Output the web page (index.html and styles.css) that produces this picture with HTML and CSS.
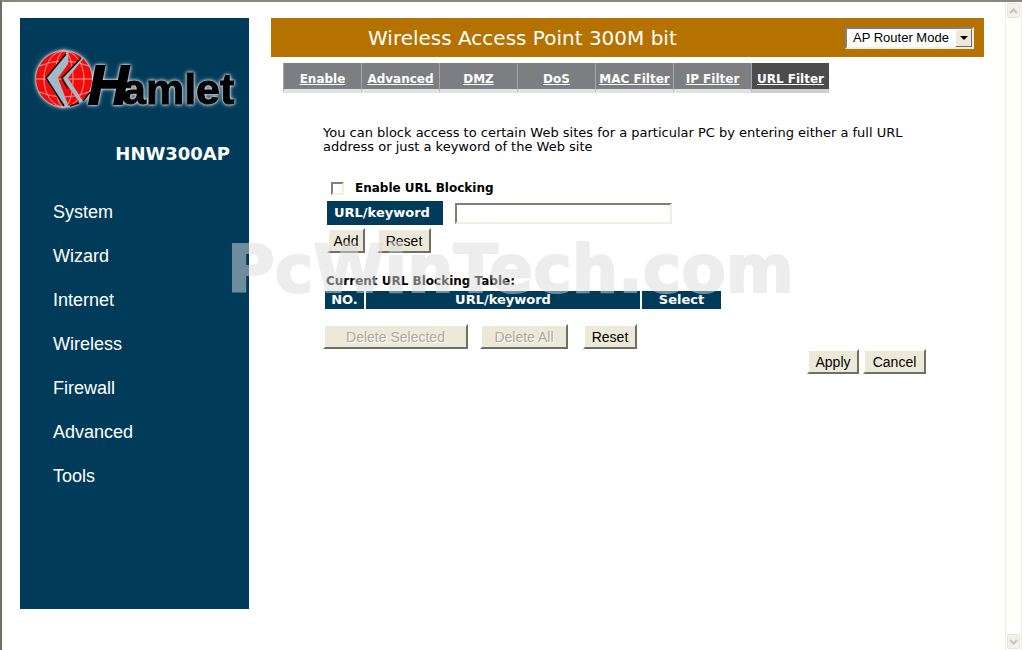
FILE: index.html
```html
<!DOCTYPE html>
<html lang="en">
<head>
    <meta charset="UTF-8">
    <meta name="viewport" content="width=device-width, initial-scale=1.0">
    <title>Wireless Access Point 300M bit</title>
    <link rel="stylesheet" href="styles.css">
</head>
<body>
    <div class="frame">
        <aside class="sidebar">
            <svg class="logo" width="206" height="68" viewBox="0 0 206 68" role="img" aria-label="Hamlet">
                <defs>
                    <clipPath id="globe">
                        <path d="M34 4 L34 8 L13 32 L32 62 L0 68 L0 0 Z"/>
                        <path d="M37 3 L50 11 L30 32 L48 57 L38 64 L26 32 L36 18 Z"/>
                        <path d="M51 13 L36 32 L51 55 L66 50 L66 14 Z"/>
                    </clipPath>
                </defs>
                <g class="logo-glow">
                    <circle cx="32" cy="33" r="28" class="globe-back"/>
                    <g clip-path="url(#globe)">
                        <circle cx="32" cy="33" r="28" class="globe-red"/>
                        <g class="globe-grid">
                            <path d="M4 33 H60 M7 20 Q32 10 57 20 M7 46 Q32 56 57 46"/>
                            <ellipse cx="32" cy="33" rx="20" ry="28"/>
                            <ellipse cx="32" cy="33" rx="9" ry="28"/>
                        </g>
                    </g>
                    <path class="globe-edge" d="M34 8 L14 32 L32 60 M49 12 L30 32 L36 43 M38 60 L47 57 M51 55 L58 46"/>
                    <text class="logo-name" y="58"><tspan class="logo-h" x="56">H</tspan><tspan x="90">amlet</tspan></text>
                </g>
            </svg>
            <h1 class="model">HNW300AP</h1>
            <nav class="menu">
                <a href="#">System</a>
                <a href="#">Wizard</a>
                <a href="#">Internet</a>
                <a href="#">Wireless</a>
                <a href="#">Firewall</a>
                <a href="#">Advanced</a>
                <a href="#">Tools</a>
            </nav>
        </aside>

        <main class="main">
            <header class="banner">
                <h2>Wireless Access Point 300M bit</h2>
                <div class="select-wrap">
                    <select class="mode" aria-label="Mode">
                        <option>AP Router Mode</option>
                    </select>
                    <span class="select-arrow"></span>
                </div>
            </header>

            <nav class="tabs">
                <a href="#">Enable</a>
                <a href="#">Advanced</a>
                <a href="#">DMZ</a>
                <a href="#">DoS</a>
                <a href="#">MAC Filter</a>
                <a href="#">IP Filter</a>
                <a href="#" class="active">URL Filter</a>
            </nav>

            <form class="content">
                <p class="intro">You can block access to certain Web sites for a particular PC by entering either a full URL address or just a keyword of the Web site</p>

                <div class="enable">
                    <input type="checkbox" id="enable">
                    <label for="enable">Enable URL Blocking</label>
                </div>
                <div class="keyword">
                    <label for="keyword">URL/keyword</label>
                    <input type="text" id="keyword">
                </div>
                <div class="add-row">
                    <button type="button" class="add">Add</button>
                    <button type="reset">Reset</button>
                </div>

                <table class="list">
                    <caption>Current URL Blocking Table:</caption>
                    <thead>
                        <tr>
                            <th class="no">NO.</th>
                            <th>URL/keyword</th>
                            <th class="sel">Select</th>
                        </tr>
                    </thead>
                </table>

                <div class="delete-row">
                    <button type="button" class="del-selected" disabled>Delete Selected</button>
                    <button type="button" class="del-all" disabled>Delete All</button>
                    <button type="reset">Reset</button>
                </div>
                <div class="apply-row">
                    <button type="submit" class="apply">Apply</button>
                    <button type="button" class="cancel">Cancel</button>
                </div>
            </form>
        </main>

        <div class="scrollbar">
            <span class="scroll-btn"><svg width="9" height="6" viewBox="0 0 9 6"><path d="M1 5 L4.500 1.500 L8 5"/></svg></span>
            <span class="scroll-btn"><svg width="9" height="6" viewBox="0 0 9 6"><path d="M1 1 L4.500 4.500 L8 1"/></svg></span>
        </div>
    </div>
    <div class="watermark">PcWinTech.com</div>
</body>
</html>
```

FILE: styles.css
```css
* { margin: 0; padding: 0; box-sizing: border-box; }
body { font-family: Verdana, "DejaVu Sans", sans-serif; font-size: 12px; background: #fff; color: #000; }

.frame { display: flex; min-height: 100vh; border-top: 2px solid #8a877a; border-left: 2px solid #716f64; }

/* left menu */
.sidebar { flex: none; align-self: flex-start; width: 229px; margin: 16px 22px 0 18px; padding: 28px 0 111px; background: #003b59; color: #fff; }
.logo { display: block; margin-left: 12px; overflow: visible; }
.logo-glow { filter: drop-shadow(0 0 1px #fff) drop-shadow(0 0 2px #a9c0cc); }
.globe-back { fill: #a3b9c6; }
.globe-red { fill: #f30b0b; }
.globe-grid { fill: none; stroke: #ff9c94; stroke-width: 1; }
.globe-edge { fill: none; stroke: #100; stroke-width: 1.5; }
.logo-name { font: bold 43px "Liberation Sans", Arial, sans-serif; stroke: #000; stroke-width: 1; }
.logo-h { font-size: 56px; font-style: italic; stroke-width: 2; }
.model { margin-top: 28px; padding-right: 19px; font-size: 18px; line-height: 24px; text-align: right; }
.menu { display: flex; flex-direction: column; margin-top: 24px; padding-left: 33px; }
.menu a { font: 18px/44px "Liberation Sans", Arial, sans-serif; color: #fff; text-decoration: none; }

.main { flex: 1; padding-top: 16px; }
.banner { display: flex; align-items: center; height: 39px; padding: 0 10px 0 97px; background: #b57200; color: #fff; }
.banner h2 { flex: 1; font-size: 20px; font-weight: normal; }
.select-wrap { position: relative; }
.mode { display: block; width: 129px; height: 22px; padding-left: 6px; appearance: none; background: #fff; border: 2px solid; border-color: #808078 #f1efe2 #f1efe2 #808078; border-radius: 0; font: 13px "Liberation Sans", Arial, sans-serif; color: #000; }
.select-arrow { position: absolute; top: 2px; right: 2px; width: 17px; height: 18px; background: #ece9d8; border: 1px solid; border-color: #fff #716f64 #716f64 #fff; pointer-events: none; }
.select-arrow::after { content: ""; position: absolute; top: 6px; left: 4px; border: 4px solid transparent; border-top-color: #000; border-bottom: 0; }

.tabs { display: flex; width: 546px; margin: 6px 0 0 12px; }
.tabs a { flex: 1; height: 30px; padding-top: 2px; background: #7c7e82; border-left: 1px solid #a5a7aa; border-bottom: 4px solid #dfe3e6; color: #fff; font-weight: bold; line-height: 28px; text-align: center; white-space: nowrap; }
.tabs a.active { background: #4c4c4c; border-bottom-color: #cfcfcf; }

.content { padding: 33px 58px 0 52px; }
.intro { max-width: 590px; font-size: 13px; line-height: 14px; }
.enable { display: flex; align-items: center; gap: 11px; margin: 26px 0 0 8px; font-weight: bold; line-height: 16px; }
.enable input { appearance: none; width: 13px; height: 13px; border: 2px solid; border-color: #808078 #f1efe2 #f1efe2 #808078; }
.keyword { display: flex; align-items: center; gap: 12px; margin: 5px 0 0 4px; }
.keyword label { width: 116px; height: 24px; padding-left: 7px; background: #003b59; color: #fff; font-size: 13px; font-weight: bold; line-height: 24px; }
.keyword input { width: 217px; height: 21px; border: 2px solid; border-color: #808078 #f1efe2 #f1efe2 #808078; }

button { width: 54px; height: 25px; background: #ece9d8; border: 2px solid; border-color: #fff #716f64 #716f64 #fff; font: 14px "Liberation Sans", Arial, sans-serif; color: #000; }
button:disabled { color: #aca899; text-shadow: 1px 1px #fff; }
.add-row { display: flex; gap: 12px; margin: 3px 0 0 4px; }
.add { width: 38px; }

.list { width: 400px; margin: 21px 0 0; border-spacing: 2px; table-layout: fixed; }
.list caption { padding-left: 3px; font-weight: bold; line-height: 15px; text-align: left; }
.list th { height: 18px; background: #003b59; color: #fff; font-size: 13px; line-height: 18px; }
.list .no { width: 39px; }
.list .sel { width: 79px; }

.delete-row { display: flex; margin-top: 13px; }
.del-selected { width: 145px; margin-right: 12px; }
.del-all { width: 88px; margin-right: 15px; }
.apply-row { display: flex; justify-content: flex-end; gap: 4px; }
.apply { width: 52px; }
.cancel { width: 63px; }

.scrollbar { display: flex; flex: none; flex-direction: column; justify-content: space-between; width: 17px; margin-left: 21px; padding: 1px 0; background: #fefefa; border: 1px solid #eeeee8; border-width: 0 1px; }
.scroll-btn { display: flex; align-items: center; justify-content: center; height: 15px; margin: 0 1px; background: #f3f2ea; border: 1px solid #e6e5dc; border-radius: 2px; }
.scroll-btn path { fill: none; stroke: #c4c3ba; stroke-width: 2; }

.watermark { position: absolute; top: 232px; left: 227px; font-size: 65px; font-weight: bold; line-height: 76px; color: #dcdcdc; -webkit-text-stroke: 2px #dcdcdc; opacity: 0.5; pointer-events: none; }
```
